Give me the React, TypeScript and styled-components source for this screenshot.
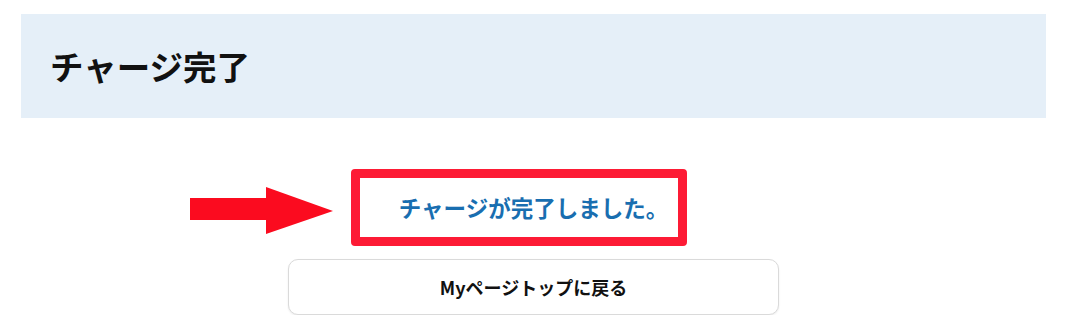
import React from "react";
import styled, { createGlobalStyle } from "styled-components";

const GlobalStyle = createGlobalStyle`
  html, body {
    margin: 0;
    padding: 0;
    background: #ffffff;
  }
  body {
    font-family: "Noto Sans CJK JP", "Noto Sans", sans-serif;
  }
`;

const Page = styled.div`
  padding: 14px 32px 0 21px;
`;

const Header = styled.header`
  height: 104px;
  background: #e5eff8;
  display: flex;
  align-items: center;
  padding-left: 29px;
  box-sizing: border-box;
`;

const Title = styled.h1`
  margin: 0;
  font-size: 33.5px;
  font-weight: 700;
  color: #111111;
  line-height: 1;
`;

const Main = styled.main`
  margin-top: 51px;
  display: flex;
  flex-direction: column;
  align-items: center;
`;

const MessageRow = styled.div`
  position: relative;
  align-self: stretch;
  height: 77px;
  display: flex;
  align-items: center;
  justify-content: center;
`;

const Message = styled.p`
  margin: 0;
  font-size: 22.5px;
  font-weight: 700;
  color: #196eb0;
  line-height: 1;
`;

// annotation drawn over the screenshot
const Highlight = styled.div`
  position: absolute;
  left: 330px;
  top: 0;
  width: 336px;
  height: 77px;
  box-sizing: border-box;
  border: 9px solid #fd1b35;
  border-radius: 4px;
`;

const Arrow = styled.svg`
  position: absolute;
  left: 169px;
  top: 18px;
`;

const BackButton = styled.button`
  margin-top: 13px;
  width: 491px;
  height: 56px;
  background: #ffffff;
  border: 1px solid #dadada;
  border-radius: 10px;
  box-shadow: 0 1px 2px rgba(0, 0, 0, 0.08);
  font-family: "Noto Sans CJK JP", "Noto Sans", sans-serif;
  font-size: 18px;
  font-weight: 700;
  color: #111111;
  cursor: pointer;
`;

const App: React.FunctionComponent = () => {
  return (
    <>
      <GlobalStyle />
      <Page>
        <Header>
          <Title>チャージ完了</Title>
        </Header>
        <Main>
          <MessageRow>
            <Message>チャージが完了しました。</Message>
            <Highlight />
            <Arrow width="144" height="48" viewBox="0 0 144 48">
              <rect x="0" y="11" width="77" height="22" fill="#fb0b1f" />
              <polygon points="76,0 143,24 76,47" fill="#fb0b1f" />
            </Arrow>
          </MessageRow>
          <BackButton>Myページトップに戻る</BackButton>
        </Main>
      </Page>
    </>
  );
};

export default App;
